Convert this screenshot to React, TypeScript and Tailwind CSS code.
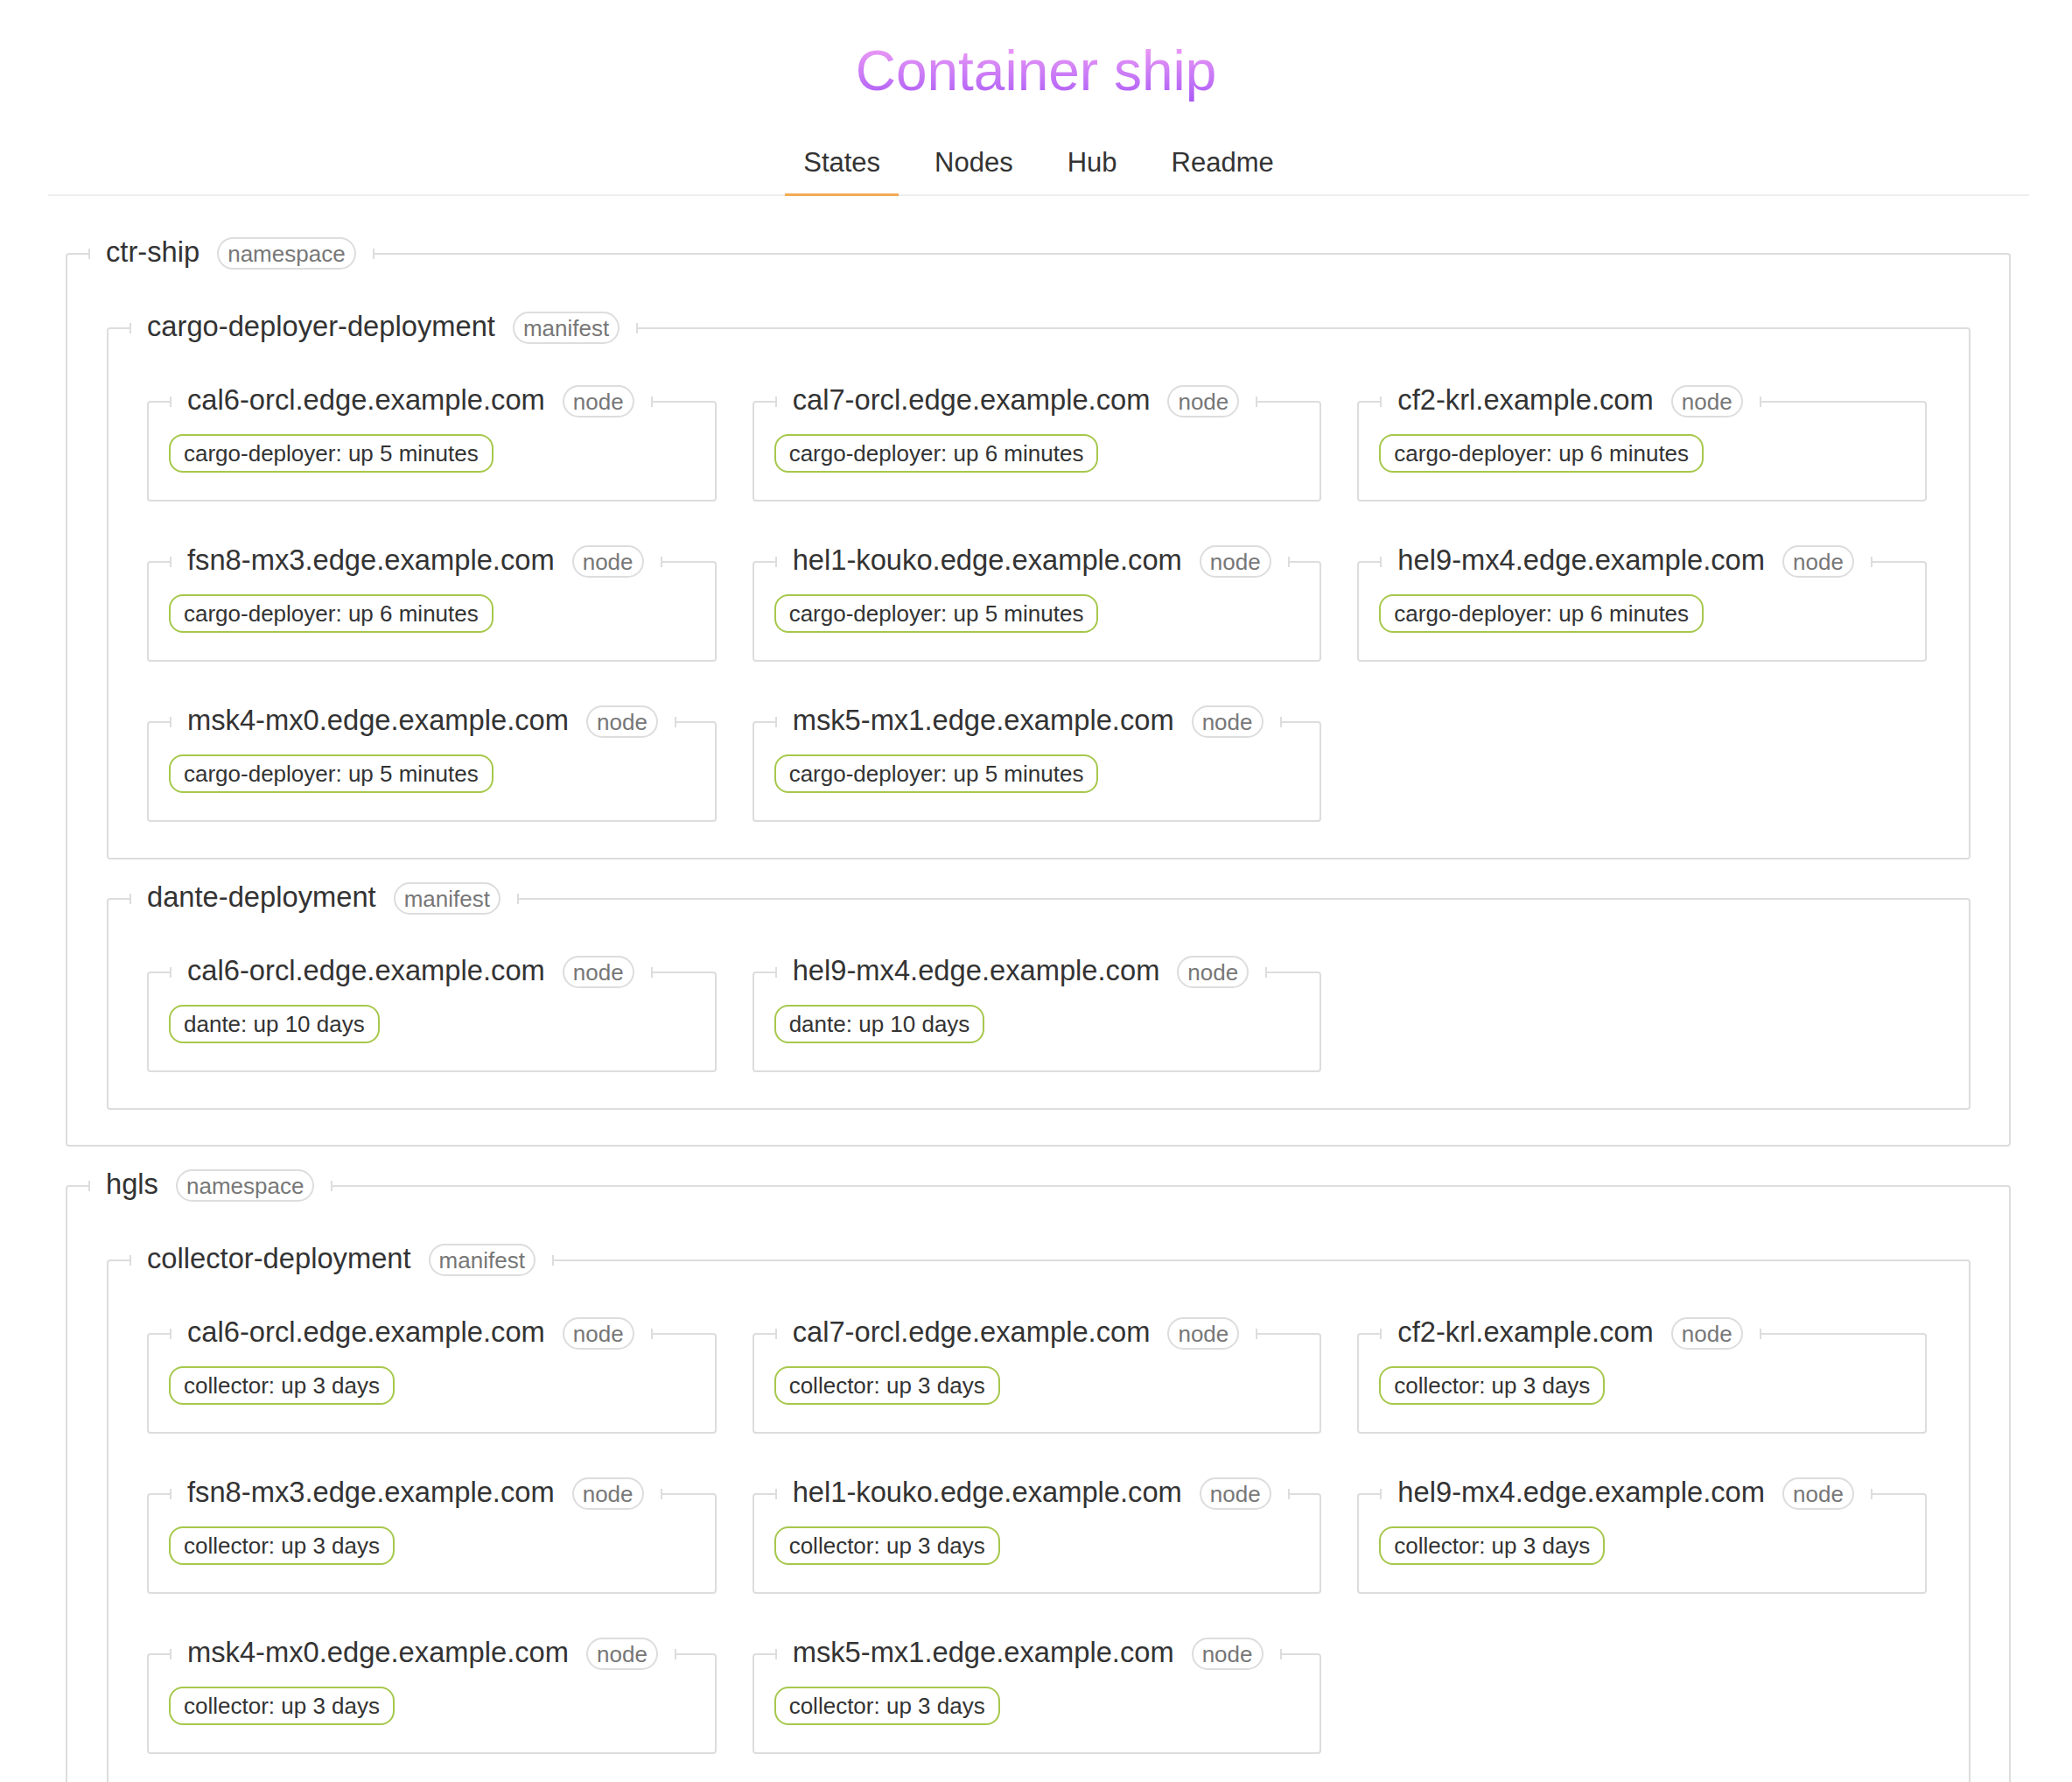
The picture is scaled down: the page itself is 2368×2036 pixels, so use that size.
import React from "react";

type Node = [string, string];
type Manifest = { name: string; nodes: Node[] };
type Namespace = { name: string; manifests: Manifest[] };

const hosts = [
  "cal6-orcl.edge.example.com",
  "cal7-orcl.edge.example.com",
  "cf2-krl.example.com",
  "fsn8-mx3.edge.example.com",
  "hel1-kouko.edge.example.com",
  "hel9-mx4.edge.example.com",
  "msk4-mx0.edge.example.com",
  "msk5-mx1.edge.example.com",
];

const cargoUptime = ["5", "6", "6", "6", "5", "6", "5", "5"];

const namespaces: Namespace[] = [
  {
    name: "ctr-ship",
    manifests: [
      {
        name: "cargo-deployer-deployment",
        nodes: hosts.map((h, i) => [h, `cargo-deployer: up ${cargoUptime[i]} minutes`] as Node),
      },
      {
        name: "dante-deployment",
        nodes: [
          ["cal6-orcl.edge.example.com", "dante: up 10 days"],
          ["hel9-mx4.edge.example.com", "dante: up 10 days"],
        ],
      },
    ],
  },
  {
    name: "hgls",
    manifests: [
      {
        name: "collector-deployment",
        nodes: hosts.map((h) => [h, "collector: up 3 days"] as Node),
      },
    ],
  },
];

const tabs = ["States", "Nodes", "Hub", "Readme"];

const Tick = () => <span className="block h-[12px] w-[2px] bg-[#dddddd]" />;

const Legend = ({ title, kind }: { title: string; kind: string }) => (
  <legend className="ml-[24px]">
    <div className="flex h-[37px] items-center">
      <Tick />
      <span className="mb-[5px] ml-[18px] whitespace-nowrap text-[32.7px] leading-[37px] text-[#333333]">
        {title}
      </span>
      <span className="ml-[20px] flex h-[37px] items-center rounded-full border-2 border-[#dddddd] px-[10px] text-[26px] leading-none text-[#777777]">
        {kind}
      </span>
      <span className="ml-[19px]">
        <Tick />
      </span>
    </div>
  </legend>
);

const NodeCard = ({ host, status }: { host: string; status: string }) => (
  <fieldset className="rounded-[4px] border-2 border-[#dddddd]">
    <Legend title={host} kind="node" />
    <div className="flex pb-[31px] pl-[23px] pt-[19px]">
      <span className="flex h-[44px] items-center whitespace-nowrap rounded-[16px] border-2 border-[#a6c84c] px-[15px] text-[26px] leading-none text-[#333333]">
        {status}
      </span>
    </div>
  </fieldset>
);

const ManifestBox = ({ manifest }: { manifest: Manifest }) => (
  <fieldset className="rounded-[4px] border-2 border-[#dddddd]">
    <Legend title={manifest.name} kind="manifest" />
    <div className="grid grid-cols-3 gap-x-[41px] gap-y-[50px] pb-[41px] pl-[44px] pr-[48px] pt-[47px]">
      {manifest.nodes.map(([host, status]) => (
        <NodeCard key={host} host={host} status={status} />
      ))}
    </div>
  </fieldset>
);

const NamespaceBox = ({ ns }: { ns: Namespace }) => (
  <fieldset className="rounded-[4px] border-2 border-[#dddddd]">
    <Legend title={ns.name} kind="namespace" />
    <div className="flex flex-col gap-[26px] pb-[40px] pl-[45px] pr-[44px] pt-[48px]">
      {ns.manifests.map((m) => (
        <ManifestBox key={m.name} manifest={m} />
      ))}
    </div>
  </fieldset>
);

const App = () => {
  return (
    <div className="min-h-screen bg-white pb-[60px] font-['Liberation_Sans',Arial,sans-serif]">
      <h1 className="pt-[44px] text-center text-[64px] font-normal leading-[74px]">
        <span className="inline-block bg-gradient-to-b from-[#f7a3f3] to-[#a955f6] bg-clip-text text-transparent">
          Container ship
        </span>
      </h1>

      <div className="ml-[55px] mr-[49px]">
        <nav className="mt-[50px] flex justify-center gap-[20px] border-b-2 border-[#eeeeee]">
          {tabs.map((t, i) => (
            <a
              key={t}
              className={
                i === 0
                  ? "-mb-[2px] border-b-[3px] border-[#f2ac55] px-[21px] pb-[17px] text-[31px] leading-[36px] text-[#333333]"
                  : "-mb-[2px] border-b-[3px] border-transparent px-[21px] pb-[17px] text-[31px] leading-[36px] text-[#333333]"
              }
            >
              {t}
            </a>
          ))}
        </nav>

        <div className="ml-[20px] mr-[21px] mt-[47px] flex flex-col gap-[26px]">
          {namespaces.map((ns) => (
            <NamespaceBox key={ns.name} ns={ns} />
          ))}
        </div>
      </div>
    </div>
  );
};

export default App;
